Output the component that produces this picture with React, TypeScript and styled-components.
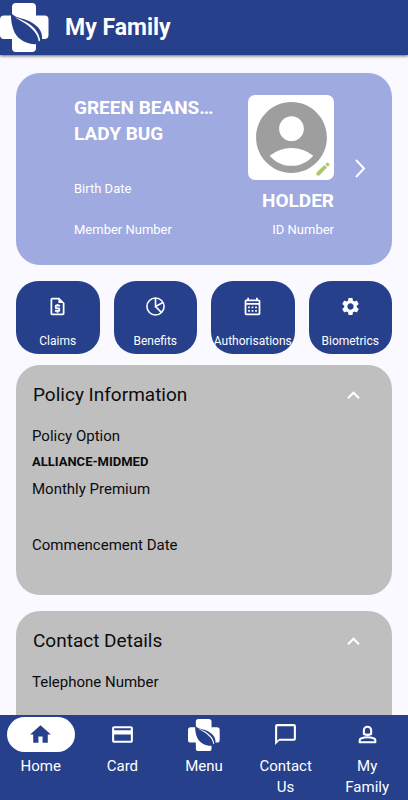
import React from "react";
import styled, { createGlobalStyle } from "styled-components";
import {
  MdOutlineRequestQuote,
  MdOutlineCalendarMonth,
  MdSettings,
  MdHome,
  MdCreditCard,
  MdChatBubbleOutline,
  MdAccountCircle,
  MdKeyboardArrowUp,
} from "react-icons/md";

const navy = "#27408b";

const GlobalStyle = createGlobalStyle`
  * { box-sizing: border-box; }
  body { margin: 0; background: #f9f9ff; font-family: Roboto, sans-serif; color: #0c0c0e; }
  h1, h2, p, dl, dt, dd { margin: 0; }
  button { font: inherit; color: inherit; border: 0; padding: 0; background: none; cursor: pointer; }
  svg { display: block; flex: none; }
`;

const Screen = styled.div`
  display: flex;
  flex-direction: column;
  height: 100vh;
`;

const Header = styled.header`
  display: flex;
  align-items: center;
  gap: 16px;
  flex: none;
  height: 55px;
  background: ${navy};
  color: #fff;
  box-shadow: 0 1px 3px rgba(0, 0, 0, 0.6);
  z-index: 1;
`;

const Title = styled.h1`
  font-size: 23px;
  line-height: 28px;
  font-weight: 700;
`;

const Content = styled.main`
  flex: 1;
  min-height: 0;
  overflow-y: auto;
  scrollbar-width: none;
  padding: 18px 16px 0;
`;

const MemberCard = styled.section`
  display: flex;
  justify-content: space-between;
  padding: 22px 20px 26px 58px;
  border-radius: 24px;
  background: #9faae0;
  color: #fff;
`;

const MemberInfo = styled.div`
  display: flex;
  flex-direction: column;
  justify-content: space-between;
  flex: 1;
  min-width: 0;
`;

const MemberName = styled.h2`
  font-size: 19px;
  line-height: 26px;
  font-weight: 700;
`;

const Caption = styled.p`
  font-size: 13px;
  line-height: 18px;
`;

const Captions = styled.div`
  display: flex;
  flex-direction: column;
  gap: 23px;
`;

const HolderInfo = styled.div`
  display: flex;
  flex-direction: column;
  align-items: flex-end;
  gap: 8px;
`;

const Avatar = styled.button`
  position: relative;
  display: grid;
  place-items: center;
  width: 86px;
  height: 85px;
  border-radius: 7px;
  background: #fff;
  color: #9e9e9e;
`;

const EditBadge = styled.span`
  position: absolute;
  right: 4px;
  bottom: 4px;
  color: #a5cb62;
`;

const Role = styled.p`
  font-size: 19px;
  line-height: 25px;
  font-weight: 700;
`;

const NextButton = styled.button`
  align-self: center;
  margin-left: 14px;
`;

const Tiles = styled.div`
  display: grid;
  grid-template-columns: repeat(4, minmax(0, 1fr));
  gap: 14px;
  margin: 16px 0 11px;
`;

const Tile = styled.button`
  display: flex;
  flex-direction: column;
  align-items: center;
  justify-content: space-between;
  height: 73px;
  padding: 15px 0 5px;
  border-radius: 22px;
  background: ${navy};
  color: #fff;
  font-size: 12px;
  line-height: 16px;
  white-space: nowrap;
`;

const Panel = styled.section<{ $open: boolean }>`
  min-height: ${(p) => (p.$open ? "230px" : "0")};
  margin-bottom: 16px;
  padding: 16px 16px 5px;
  border-radius: 24px;
  background: #bfbfbf;
`;

const PanelToggle = styled.button`
  display: flex;
  align-items: center;
  justify-content: space-between;
  width: 100%;
  padding: 0 10px 0 1px;
  margin-bottom: 16px;
  text-align: left;
`;

const PanelTitle = styled.span`
  font-size: 19px;
  line-height: 28px;
`;

const ToggleIcon = styled.span`
  color: #fff;
`;

const Fields = styled.dl`
  font-size: 15px;
  line-height: 22px;
`;

const FieldName = styled.dt`
  font-weight: 400;
`;

const FieldValue = styled.dd`
  padding: 4px 0 5px;
  font-size: 13px;
  font-weight: 700;

  &:empty {
    height: 34px;
  }
`;

const BottomNav = styled.nav`
  display: grid;
  grid-template-columns: repeat(5, minmax(0, 1fr));
  flex: none;
  min-height: 85px;
  background: ${navy};
`;

const NavItem = styled.a`
  display: flex;
  flex-direction: column;
  align-items: center;
  padding-top: 2px;
  gap: 4px;
  color: #fff;
  font-size: 15px;
  line-height: 21px;
  text-align: center;
  text-decoration: none;
`;

const NavIcon = styled.span<{ $active?: boolean }>`
  display: grid;
  place-items: center;
  width: 68px;
  height: 35px;
  border-radius: 18px;
  background: ${(p) => (p.$active ? "#fff" : "transparent")};
  color: ${(p) => (p.$active ? navy : "#fff")};
`;

const NavLabel = styled.span`
  max-width: 64px;
`;

const Logo = ({ size }: { size: number }) => (
  <svg width={size} height={size} viewBox="0 0 49 49" aria-hidden="true">
    <path
      fill="#fff"
      d="M16 0h16a4 4 0 0 1 4 4v8.500h8.500a4 4 0 0 1 4 4v15.500a4 4 0 0 1-4 4H36V45a4 4 0 0 1-4 4H16a4 4 0 0 1-4-4v-9H4a4 4 0 0 1-4-4V16.500a4 4 0 0 1 4-4h8V4a4 4 0 0 1 4-4z"
    />
    <path
      fill={navy}
      d="M11 9C13 14 19 14.500 25 16.500C36 20.500 43.500 27 42 37.500L37.500 41C28 42 19 37.500 14.500 29.500C12 24 10.500 17 11 9z"
    />
    <path
      fill="#fff"
      d="M15 14.500C25 17.500 38.500 24 40.200 37.500L38.800 38.500C37.500 29 30 22.500 15 14.500z"
    />
  </svg>
);

const BenefitsIcon = () => (
  <svg width="21" height="21" viewBox="0 0 24 24" fill="none" stroke="currentColor" strokeWidth="1.800" aria-hidden="true">
    <circle cx="12" cy="12" r="9.800" />
    <path d="M12 2.200V12L20.500 7.500M12 12l7 7" />
  </svg>
);

const PencilIcon = () => (
  <svg width="14" height="14" viewBox="0 0 14 14" fill="currentColor" aria-hidden="true">
    <path d="M0.500 13.500V10.500L8.500 3L11 5.500L3.300 13.500zM9.300 2.300L11 0.800Q11.500 0.400 12 0.800L13.300 2.100Q13.700 2.600 13.300 3.100L11.800 4.700z" />
  </svg>
);

const PersonIcon = () => (
  <svg width="25" height="25" viewBox="0 0 24 24" fill="none" stroke="currentColor" strokeWidth="2" strokeLinejoin="round" aria-hidden="true">
    <path d="M8.500 11.500V8a3.500 3.500 0 0 1 7 0v3.500q-3.500 1.800-7 0z" />
    <path d="M4.500 19.500V17.500q0-1.200 1.200-1.700Q12 13.500 18.300 15.800q1.200.5 1.200 1.700v2z" />
  </svg>
);

const NextIcon = () => (
  <svg width="24" height="24" viewBox="0 0 24 24" fill="none" stroke="currentColor" strokeWidth="2" aria-hidden="true">
    <path d="M8 5l8 8.500-8 8.500" />
  </svg>
);

const tiles = [
  { label: "Claims", icon: <MdOutlineRequestQuote size={21} /> },
  { label: "Benefits", icon: <BenefitsIcon /> },
  { label: "Authorisations", icon: <MdOutlineCalendarMonth size={21} /> },
  { label: "Biometrics", icon: <MdSettings size={21} /> },
];

const navItems = [
  { label: "Home", icon: <MdHome size={25} />, active: true },
  { label: "Card", icon: <MdCreditCard size={25} /> },
  { label: "Menu", icon: <Logo size={32} /> },
  { label: "Contact Us", icon: <MdChatBubbleOutline size={25} /> },
  { label: "My Family", icon: <PersonIcon /> },
];

type Field = { name: string; value?: string };

const InfoPanel = ({ title, fields }: { title: string; fields: Field[] }) => {
  const [open, setOpen] = React.useState(true);
  return (
    <Panel $open={open}>
      <PanelToggle aria-expanded={open} onClick={() => setOpen(!open)}>
        <PanelTitle>{title}</PanelTitle>
        <ToggleIcon>
          <MdKeyboardArrowUp size={25} />
        </ToggleIcon>
      </PanelToggle>
      {open && (
        <Fields>
          {fields.map((f) => (
            <React.Fragment key={f.name}>
              <FieldName>{f.name}</FieldName>
              <FieldValue>{f.value}</FieldValue>
            </React.Fragment>
          ))}
        </Fields>
      )}
    </Panel>
  );
};

export default function App() {
  return (
    <Screen>
      <GlobalStyle />
      <Header>
        <Logo size={49} />
        <Title>My Family</Title>
      </Header>
      <Content>
        <MemberCard>
          <MemberInfo>
            <MemberName>
              GREEN BEANS…
              <br />
              LADY BUG
            </MemberName>
            <Captions>
              <Caption>Birth Date</Caption>
              <Caption>Member Number</Caption>
            </Captions>
          </MemberInfo>
          <HolderInfo>
            <Avatar aria-label="Edit photo">
              <MdAccountCircle size={85} />
              <EditBadge>
                <PencilIcon />
              </EditBadge>
            </Avatar>
            <Role>HOLDER</Role>
            <Caption>ID Number</Caption>
          </HolderInfo>
          <NextButton aria-label="Next member">
            <NextIcon />
          </NextButton>
        </MemberCard>
        <Tiles>
          {tiles.map((t) => (
            <Tile key={t.label}>
              {t.icon}
              {t.label}
            </Tile>
          ))}
        </Tiles>
        <InfoPanel
          title="Policy Information"
          fields={[
            { name: "Policy Option", value: "ALLIANCE-MIDMED" },
            { name: "Monthly Premium" },
            { name: "Commencement Date" },
          ]}
        />
        <InfoPanel title="Contact Details" fields={[{ name: "Telephone Number" }]} />
      </Content>
      <BottomNav>
        {navItems.map((n) => (
          <NavItem key={n.label} href="#" aria-current={n.active ? "page" : undefined}>
            <NavIcon $active={n.active}>{n.icon}</NavIcon>
            <NavLabel>{n.label}</NavLabel>
          </NavItem>
        ))}
      </BottomNav>
    </Screen>
  );
}
